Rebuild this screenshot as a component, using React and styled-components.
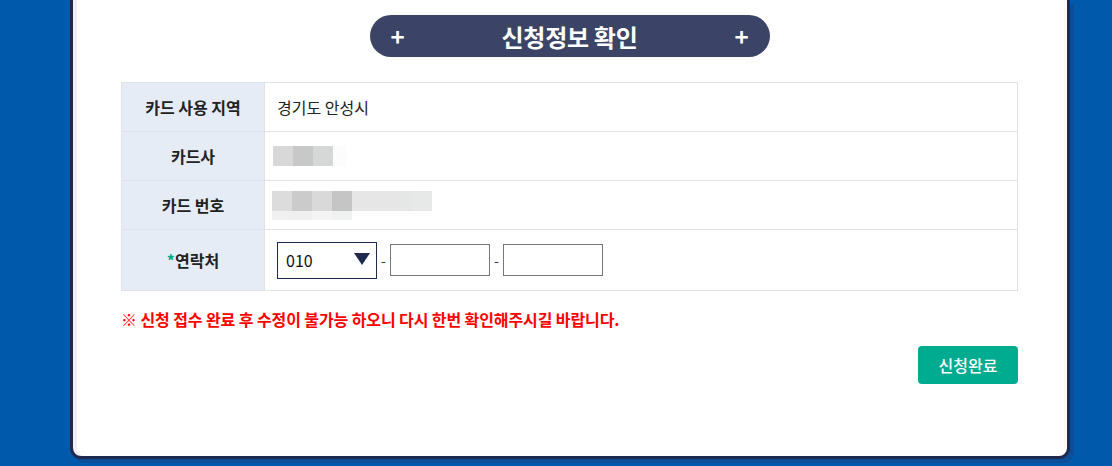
import React from 'react';
import styled, { createGlobalStyle } from 'styled-components';

const GlobalStyle = createGlobalStyle`
    html, body {
        margin: 0;
        padding: 0;
        background: #0059ab;
        font-family: "Noto Sans CJK KR", "Noto Sans", sans-serif;
        color: #222;
    }
`;

const rows = [
    { label: '카드 사용 지역', value: '경기도 안성시' },
    { label: '카드사', blur: 'company' },
    { label: '카드 번호', blur: 'number' },
];

function App() {
    return (
        <>
            <GlobalStyle />
            <Page>
                <Card>
                    <TitleBar>
                        <Plus>+</Plus>
                        <Title>신청정보 확인</Title>
                        <Plus>+</Plus>
                    </TitleBar>
                    <InfoTable>
                        <tbody>
                            {rows.map((r) => (
                                <Row key={r.label}>
                                    <Label>{r.label}</Label>
                                    <Value>
                                        {r.value}
                                        {r.blur === 'company' && (
                                            <BlurLine $shift={-4}>
                                                <Pixel $c="#d8d8d8" />
                                                <Pixel $c="#c8c8c9" />
                                                <Pixel $c="#d6d7d7" />
                                                <Pixel $c="#fcfcfc" $w={13} />
                                            </BlurLine>
                                        )}
                                        {r.blur === 'number' && (
                                            <BlurStack>
                                                <BlurLine>
                                                    <Pixel $c="#dcdcdc" />
                                                    <Pixel $c="#cbcbcc" />
                                                    <Pixel $c="#d9d9d9" />
                                                    <Pixel $c="#c5c5c6" />
                                                    <Pixel $c="#e6e6e6" $w={60} />
                                                    <Pixel $c="#e7e8e8" />
                                                </BlurLine>
                                                <BlurLine $h={9}>
                                                    <Pixel $c="#f0f0f0" />
                                                    <Pixel $c="#efefef" />
                                                    <Pixel $c="#f3f4f3" />
                                                    <Pixel $c="#eff1f0" />
                                                </BlurLine>
                                            </BlurStack>
                                        )}
                                    </Value>
                                </Row>
                            ))}
                            <Row $tall>
                                <Label><Star>*</Star>연락처</Label>
                                <Value>
                                    <PhoneGroup>
                                        <PhoneSelect>
                                            <span>010</span>
                                            <svg width="16" height="12" viewBox="0 0 16 12">
                                                <path d="M0 0 H16 L8 12 Z" fill="#1f2a4f" />
                                            </svg>
                                        </PhoneSelect>
                                        <Dash>-</Dash>
                                        <PhoneInput />
                                        <Dash>-</Dash>
                                        <PhoneInput />
                                    </PhoneGroup>
                                </Value>
                            </Row>
                        </tbody>
                    </InfoTable>
                    <Notice>※ 신청 접수 완료 후 수정이 불가능 하오니 다시 한번 확인해주시길 바랍니다.</Notice>
                    <Actions>
                        <SubmitButton>신청완료</SubmitButton>
                    </Actions>
                </Card>
            </Page>
        </>
    );
}

export default App;

const Page = styled.div`
    padding: 0 42px 8px 70px;
`;

const Card = styled.div`
    box-sizing: border-box;
    width: 1000px;
    background: #fff;
    border: 3px solid #1f2a4f;
    border-top: none;
    border-radius: 0 0 11px 11px;
    padding: 15px 49px 72px 48px;
    box-shadow: inset 4px 0 0 #efefef, 4px 4px 0 #0a4f98;
`;

const TitleBar = styled.div`
    width: 400px;
    height: 42px;
    margin: 0 auto 25px;
    box-sizing: border-box;
    padding: 0 20px;
    border-radius: 21px;
    background: #3b4466;
    display: flex;
    align-items: center;
    justify-content: space-between;
    color: #fff;
`;

const Plus = styled.span`
    font-size: 24px;
    font-weight: 700;
    line-height: 1;
    width: 16px;
    text-align: center;
`;

const Title = styled.h2`
    margin: 0;
    font-size: 24px;
    font-weight: 700;
    letter-spacing: -0.3px;
`;

const InfoTable = styled.table`
    width: 897px;
    border-collapse: collapse;
    border: 1px solid #dfe2e6;
`;

const Row = styled.tr`
    height: ${(p) => (p.$tall ? '61px' : '49px')};
    border-bottom: 1px solid #dfe2e6;
`;

const Label = styled.th`
    width: 142px;
    background: #e5ecf5;
    border-right: 1px solid #dfe2e6;
    font-size: 16px;
    font-weight: 700;
    color: #222;
    text-align: center;
    padding: 0;
`;

const Star = styled.span`
    color: #00a98a;
`;

const Value = styled.td`
    padding: 0 0 0 12px;
    font-size: 16px;
    color: #222;
`;

const BlurStack = styled.div`
    display: flex;
    flex-direction: column;
    padding-top: 1px;
    margin-left: -5px;
`;

const BlurLine = styled.div`
    display: flex;
    height: ${(p) => p.$h || 20}px;
    margin-left: ${(p) => p.$shift || 0}px;
`;

const Pixel = styled.span`
    width: ${(p) => p.$w || 20}px;
    background: ${(p) => p.$c};
`;

const PhoneGroup = styled.div`
    display: flex;
    align-items: center;
`;

const PhoneSelect = styled.div`
    box-sizing: border-box;
    width: 100px;
    height: 37px;
    border: 1px solid #1f2a4f;
    display: flex;
    align-items: center;
    justify-content: space-between;
    padding: 0 6px 3px 8px;
    font-size: 16px;
    color: #111;
    span {
        padding-top: 3px;
    }
`;

const Dash = styled.span`
    width: 13px;
    text-align: center;
    font-size: 14px;
    color: #333;
`;

const PhoneInput = styled.input`
    box-sizing: border-box;
    width: 100px;
    height: 32px;
    border: 1px solid #777;
    border-radius: 0;
    margin: 0;
    padding: 0 4px;
    background: #fff;
`;

const Notice = styled.p`
    margin: 17px 0 0;
    color: #ff0000;
    font-size: 16px;
    font-weight: 700;
    line-height: 22px;
    letter-spacing: -0.1px;
`;

const Actions = styled.div`
    display: flex;
    justify-content: flex-end;
    margin-top: 16px;
`;

const SubmitButton = styled.button`
    width: 100px;
    height: 38px;
    border: none;
    border-radius: 4px;
    background: #00ac8f;
    color: #fff;
    font-family: inherit;
    font-size: 16px;
    font-weight: 500;
`;
